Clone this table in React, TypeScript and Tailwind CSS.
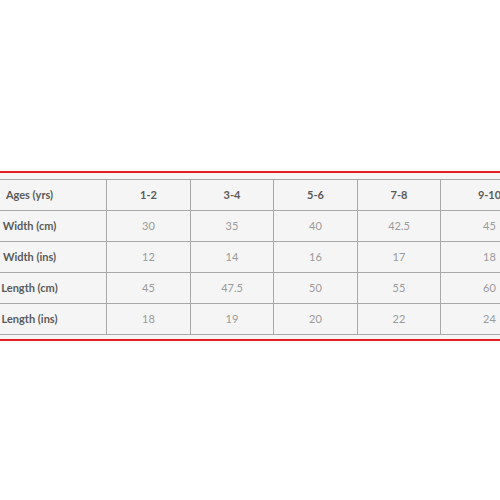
import React from "react";

const header = ["Ages (yrs)", "1-2", "3-4", "5-6", "7-8", "9-10"];
const rows = [
  ["Width (cm)", "30", "35", "40", "42.5", "45"],
  ["Width (ins)", "12", "14", "16", "17", "18"],
  ["Length (cm)", "45", "47.5", "50", "55", "60"],
  ["Length (ins)", "18", "19", "20", "22", "24"],
];
const widths = [154, 84, 83, 84, 83, 98];

export default function App() {
  return (
    <div
      className="w-[500px] h-[500px] bg-white overflow-hidden pt-[171px]"
      style={{ fontFamily: "Lato, 'Open Sans', sans-serif" }}
    >
      <div className="h-[2px] bg-[#e41e26]" />
      <div className="bg-[#f6f6f6] pt-[6px] pb-[4px] overflow-hidden">
        <table className="ml-[-48px] border-collapse table-fixed w-[586px]">
          <colgroup>
            {widths.map((w, i) => (
              <col key={i} style={{ width: w }} />
            ))}
          </colgroup>
          <tbody>
            <tr className="h-[31px]">
              {header.map((h, i) => (
                <td
                  key={i}
                  className="border border-[#a9a9a9] bg-[#f5f5f5] text-center text-[11px] font-bold text-[#5a5a5a]"
                >
                  {h}
                </td>
              ))}
            </tr>
            {rows.map((r, ri) => (
              <tr key={ri} className="h-[31px]">
                {r.map((c, ci) => (
                  <td
                    key={ci}
                    className={
                      "border border-[#a9a9a9] bg-[#f5f5f5] text-center text-[11px] " +
                      (ci === 0 ? "font-bold text-[#5a5a5a]" : "text-[#9a9a9a]")
                    }
                  >
                    {c}
                  </td>
                ))}
              </tr>
            ))}
          </tbody>
        </table>
      </div>
      <div className="h-[2px] bg-[#e41e26]" />
    </div>
  );
}
